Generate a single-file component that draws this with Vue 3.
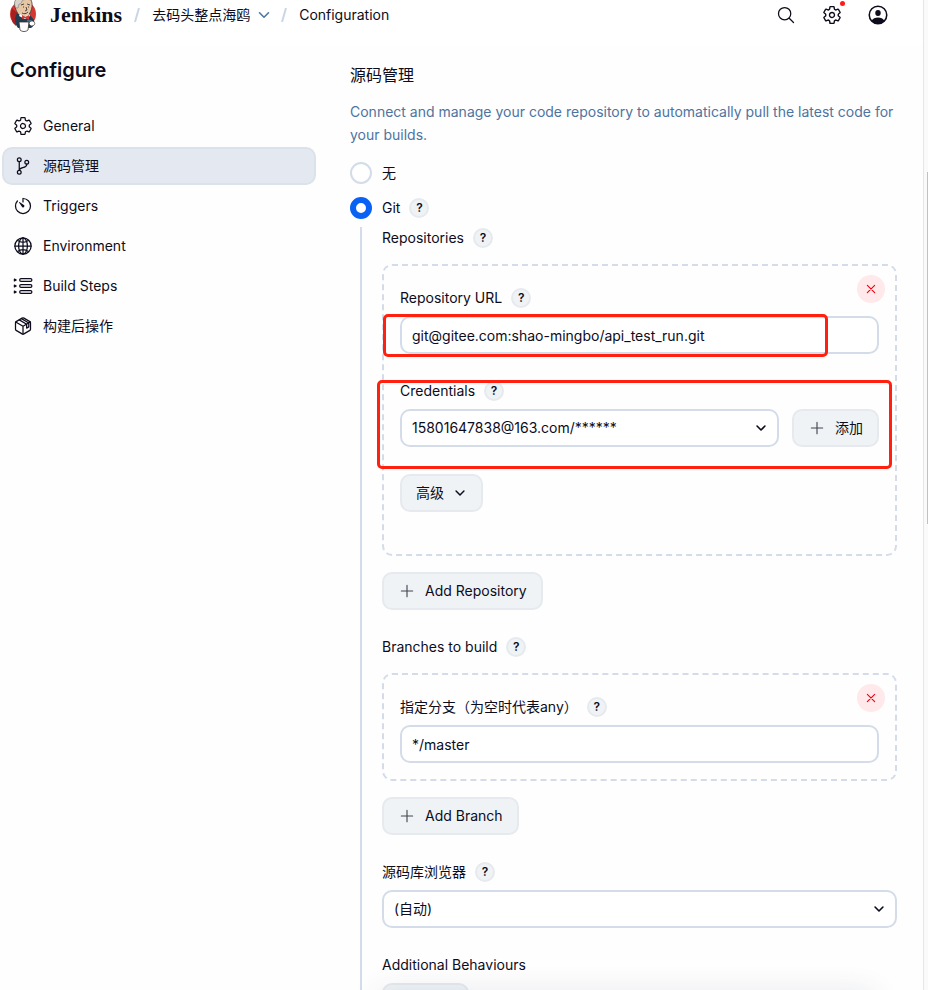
<script setup>
import { ref, h } from 'vue'

const scm = ref('git')
const repoUrl = ref('git@gitee.com:shao-mingbo/api_test_run.git')
const branch = ref('*/master')
const credentials = ref('15801647838@163.com/******')
const browser = ref('(自动)')
const active = ref('scm')

const sections = [
  { id: 'general', label: 'General', icon: 'gear' },
  { id: 'scm', label: '源码管理', icon: 'branch' },
  { id: 'triggers', label: 'Triggers', icon: 'timer' },
  { id: 'environment', label: 'Environment', icon: 'globe' },
  { id: 'steps', label: 'Build Steps', icon: 'list' },
  { id: 'post', label: '构建后操作', icon: 'cube' },
]

const gear =
  'M262.29 192.31a64 64 0 1057.4 57.4 64.13 64.13 0 00-57.4-57.4zM416.39 256a154.34 154.34 0 01-1.53 20.79l45.21 35.46a10.81 10.81 0 012.45 13.75l-42.77 74a10.81 10.81 0 01-13.14 4.59l-44.9-18.08a16.11 16.11 0 00-15.17 1.75A164.48 164.48 0 01325 400.8a15.94 15.94 0 00-8.82 12.14l-6.73 47.89a11.08 11.08 0 01-10.68 9.17h-85.54a11.11 11.11 0 01-10.69-8.87l-6.72-47.82a16.07 16.07 0 00-9-12.22 155.3 155.3 0 01-21.46-12.57 16 16 0 00-15.11-1.71l-44.89 18.07a10.81 10.81 0 01-13.14-4.58l-42.77-74a10.8 10.8 0 012.45-13.75l38.21-30a16.05 16.05 0 006-14.08c-.36-4.17-.58-8.33-.58-12.5s.21-8.27.58-12.35a16 16 0 00-6.07-13.94l-38.19-30A10.81 10.81 0 0149.48 186l42.77-74a10.81 10.81 0 0113.14-4.59l44.9 18.08a16.11 16.11 0 0015.17-1.75A164.48 164.48 0 01187 111.2a15.94 15.94 0 008.82-12.14l6.73-47.89A11.08 11.08 0 01213.23 42h85.54a11.11 11.11 0 0110.69 8.87l6.72 47.82a16.07 16.07 0 009 12.22 155.3 155.3 0 0121.46 12.57 16 16 0 0015.11 1.71l44.89-18.07a10.81 10.81 0 0113.14 4.58l42.77 74a10.8 10.8 0 01-2.45 13.75l-38.21 30a16.05 16.05 0 00-6.05 14.08c.33 4.14.55 8.3.55 12.47z'

const strokes = {
  gear: [gear],
  branch: [
    'M208 96a48 48 0 11-96 0 48 48 0 0196 0zM208 416a48 48 0 11-96 0 48 48 0 0196 0zM400 160a48 48 0 11-96 0 48 48 0 0196 0z',
    'M160 368V144M352 208c0 128-192 48-192 160',
  ],
  timer: [
    'M112.91 128A191.85 191.85 0 0064 254c-1.18 106.35 85.65 193.8 192 194 106.2.2 192-85.83 192-192 0-104.54-83.55-189.61-187.5-192a4.36 4.36 0 00-4.5 4.37V152',
  ],
  globe: [
    'M256 48C141.13 48 48 141.13 48 256s93.13 208 208 208 208-93.13 208-208S370.87 48 256 48z',
    'M256 48c-58.07 0-112.67 93.13-112.67 208S197.93 464 256 464s112.67-93.13 112.67-208S314.07 48 256 48z',
    'M117.33 117.33c38.24 27.15 86.38 43.34 138.67 43.34s100.43-16.19 138.67-43.34M394.67 394.67c-38.24-27.15-86.38-43.34-138.67-43.34s-100.43 16.19-138.67 43.34M256 48v416M464 256H48',
  ],
  list: [
    'M205 68h244a34 34 0 010 68H205a34 34 0 010-68zM205 222h244a34 34 0 010 68H205a34 34 0 010-68zM205 376h244a34 34 0 010 68H205a34 34 0 010-68z',
    'M36 78l46 24-46 24zM36 232l46 24-46 24zM36 386l46 24-46 24z',
  ],
  cube: [
    'M448 341.37V170.61A32 32 0 00432.11 143l-152-88.46a47.94 47.94 0 00-48.24 0L79.89 143A32 32 0 0064 170.61v170.76A32 32 0 0079.89 369l152 88.46a48 48 0 0048.24 0l152-88.46A32 32 0 00448 341.37z',
    'M69 153.99l187 110 187-110M256 463.99v-200M162 100l187 110v100l55-32v-100L216 68',
  ],
  search: ['M221.09 64a157.09 157.09 0 10157.09 157.09A157.1 157.1 0 00221.09 64zM338.29 338.29L448 448'],
  chevron: ['M112 184l144 144 144-144'],
  plus: ['M256 96v320M416 256H96'],
  close: ['M360 360L152 152M360 152L152 360'],
  person: ['M480 256a224 224 0 11-448 0 224 224 0 01448 0z'],
}

const fills = {
  timer: 'M233.38 278.63l-79-113a8.13 8.13 0 0111.32-11.32l113 79a32.5 32.5 0 01-37.25 53.26 33.21 33.21 0 01-8.07-7.94z',
  person: 'M256 128a70 76 0 110 152 70 76 0 010-152zM92 400c36-60 92-80 164-80s128 20 164 80c-40 52-100 84-164 84s-124-32-164-84z',
}

const Icon = (props) =>
  h('svg', { viewBox: '0 0 512 512', 'aria-hidden': 'true', fill: 'none' }, [
    ...strokes[props.name].map((d) =>
      h('path', {
        d,
        stroke: 'currentColor',
        'stroke-width': props.weight || 32,
        'stroke-linecap': 'round',
        'stroke-linejoin': 'round',
      }),
    ),
    fills[props.name] ? h('path', { d: fills[props.name], fill: 'currentColor' }) : null,
  ])
Icon.props = ['name', 'weight']

const Help = (props) => h('button', { type: 'button', 'aria-label': 'Help for ' + props.topic }, '?')
Help.props = ['topic']
</script>

<template>
  <div class="page">
    <div class="app">
      <header class="header">
        <a class="brand" href="#">
          <svg class="logo" viewBox="0 0 28 38" aria-hidden="true">
            <circle cx="14" cy="19" r="13" fill="#d33833" />
            <path d="M4 28c-2-4-3-10-1-15l5 5-1 13z" fill="#a91f20" />
            <path d="M8 17C5 12 5 5 9 3c4-3 11-3 13 2 2 4 1 9-1 13l-5 5-6-2z" fill="#e6c6a4" stroke="#3c3430" stroke-width=".8" />
            <path d="M7 13C4 9 6 3 10 2c4-2 10-1 12 3-4-1-7-1-9 1-1 3-2 3-3 3l-1 4z" fill="#d8d2ca" stroke="#6d6b6d" stroke-width=".5" />
            <path d="M12 10l3-1M18 9l3 1M14 12h1M19 12h1M17 12l1 3-2 1M13 18c2 1 4 1 6-1" fill="none" stroke="#3c3430" stroke-width=".9" />
            <path d="M8 18l6 4 7-2 4 5c1 4-1 7-3 8H9c-3-4-4-10-1-15z" fill="#213d4f" />
            <path d="M11 19l4 3 5-3 1 2-5 3-6-3z" fill="#fff" />
            <path d="M13 20l3 2 4-2v5l-4-2-3 1z" fill="#d33833" />
            <path d="M18 26h5M18 28h4" stroke="#6ca5bf" stroke-width="1" />
            <path d="M10 27h10l-1 8c-2 2-6 2-8 0z" fill="#fff" stroke="#3c3430" stroke-width=".8" />
            <path d="M20 29c0-3 4-4 5-2 2 2 0 4-3 4z" fill="#fff" stroke="#3c3430" stroke-width=".7" />
          </svg>
          <span class="wordmark">Jenkins</span>
        </a>
        <svg class="slash" viewBox="0 0 6 16" aria-hidden="true"><path d="M5 1L1 15" /></svg>
        <a class="crumb project" href="#">去码头整点海鸥</a>
        <button class="crumb-menu" type="button" aria-label="Project menu"><Icon name="chevron" weight="52" /></button>
        <svg class="slash" viewBox="0 0 6 16" aria-hidden="true"><path d="M5 1L1 15" /></svg>
        <a class="crumb" href="#">Configuration</a>
        <div class="actions">
          <button class="action" type="button" aria-label="Search"><Icon name="search" /></button>
          <button class="action" type="button" aria-label="Manage Jenkins">
            <Icon name="gear" weight="36" />
            <span class="dot"></span>
          </button>
          <button class="action" type="button" aria-label="Account"><Icon name="person" weight="40" /></button>
        </div>
      </header>

      <div class="body">
        <aside class="side">
          <h1 class="title">Configure</h1>
          <nav class="nav">
            <a
              v-for="s in sections"
              :key="s.id"
              class="nav-item"
              :class="{ selected: s.id === active }"
              :href="'#' + s.id"
              @click="active = s.id"
            >
              <Icon class="nav-icon" :name="s.icon" />
              <span>{{ s.label }}</span>
            </a>
          </nav>
        </aside>

        <main class="content">
          <h2 class="heading">源码管理</h2>
          <p class="description">
            Connect and manage your code repository to automatically pull the latest code for your builds.
          </p>

          <div class="radios">
            <div class="radio-row">
              <input id="scm-none" v-model="scm" class="radio" type="radio" name="scm" value="none" />
              <label for="scm-none">无</label>
            </div>
            <div class="radio-row">
              <input id="scm-git" v-model="scm" class="radio" type="radio" name="scm" value="git" />
              <label for="scm-git">Git</label>
              <Help class="help" topic="Git" />
            </div>
          </div>

          <div class="nested">
            <section class="group">
              <div class="label-row group-label">
                <span>Repositories</span>
                <Help class="help" topic="Repositories" />
              </div>
              <div class="chunk repository">
                <button class="remove" type="button" aria-label="Delete repository"><Icon name="close" /></button>
                <div class="field">
                  <div class="label-row">
                    <label for="repo-url">Repository URL</label>
                    <Help class="help" topic="Repository URL" />
                  </div>
                  <div class="control">
                    <input id="repo-url" v-model="repoUrl" class="input" type="text" spellcheck="false" />
                    <span class="mark mark-url"></span>
                  </div>
                </div>
                <div class="field">
                  <div class="label-row">
                    <label for="credentials">Credentials</label>
                    <Help class="help" topic="Credentials" />
                  </div>
                  <div class="split">
                    <div class="control">
                      <select id="credentials" v-model="credentials" class="input">
                        <option>15801647838@163.com/******</option>
                      </select>
                      <Icon class="caret" name="chevron" weight="60" />
                    </div>
                    <button class="button" type="button"><Icon class="plus" name="plus" />添加</button>
                  </div>
                  <span class="mark mark-credentials"></span>
                </div>
                <button class="button advanced" type="button">
                  高级<Icon class="more" name="chevron" weight="54" />
                </button>
              </div>
              <button class="button" type="button"><Icon class="plus" name="plus" />Add Repository</button>
            </section>

            <section class="group">
              <div class="label-row group-label">
                <span>Branches to build</span>
                <Help class="help" topic="Branches to build" />
              </div>
              <div class="chunk">
                <button class="remove" type="button" aria-label="Delete branch"><Icon name="close" /></button>
                <div class="field">
                  <div class="label-row">
                    <label for="branch">指定分支（为空时代表any）</label>
                    <Help class="help" topic="指定分支" />
                  </div>
                  <input id="branch" v-model="branch" class="input" type="text" spellcheck="false" />
                </div>
              </div>
              <button class="button" type="button"><Icon class="plus" name="plus" />Add Branch</button>
            </section>

            <div class="field">
              <div class="label-row">
                <label for="browser">源码库浏览器</label>
                <Help class="help" topic="源码库浏览器" />
              </div>
              <div class="control">
                <select id="browser" v-model="browser" class="input">
                  <option>(自动)</option>
                </select>
                <Icon class="caret" name="chevron" weight="60" />
              </div>
            </div>

            <div class="field">
              <div class="label-row"><span>Additional Behaviours</span></div>
              <button class="button behaviour" type="button" aria-label="Add behaviour">
                <Icon class="plus" name="plus" /><Icon class="more" name="chevron" weight="54" />
              </button>
            </div>
          </div>
          <div class="bottom-bar"></div>
        </main>
      </div>
    </div>
    <div class="track"><div class="thumb"></div></div>
  </div>
</template>

<style>
body {
  margin: 0;
  background: #fefefe;
}
</style>

<style scoped>
* {
  box-sizing: border-box;
}
.page {
  display: flex;
  height: 100vh;
  overflow: hidden;
  color: #0c0c1c;
  font: 14px/20px Inter, "Noto Sans CJK SC", sans-serif;
}
.app {
  flex: 1;
  min-width: 0;
  position: relative;
}
a {
  color: inherit;
  text-decoration: none;
}
button,
input,
select {
  font: inherit;
  color: inherit;
  margin: 0;
}
button {
  cursor: pointer;
}
svg {
  display: block;
  flex: none;
}

.header {
  display: flex;
  align-items: center;
  height: 46px;
  padding: 0 35px 16px 9px;
  background: #ffffff;
}
.brand {
  display: flex;
  align-items: center;
  gap: 13px;
}
.logo {
  width: 28px;
  height: 38px;
  margin: -5px 0 -3px;
}
.wordmark {
  font: bold 22px/28px "Liberation Serif", serif;
}
.slash {
  width: 6px;
  height: 16px;
  margin: 0 12px;
}
.slash path {
  stroke: #c9d6e6;
  stroke-width: 2;
}
.crumb-menu {
  display: flex;
  padding: 0;
  margin: 0 -3px 0 6px;
  border: 0;
  background: none;
  color: #4d78a8;
}
.crumb-menu svg {
  width: 16px;
  height: 16px;
}
.actions {
  display: flex;
  gap: 26px;
  margin-left: auto;
}
.action {
  position: relative;
  width: 20px;
  height: 20px;
  padding: 0;
  border: 0;
  background: none;
}
.dot {
  position: absolute;
  top: -4px;
  right: -3px;
  width: 5px;
  height: 5px;
  border-radius: 50%;
  background: #ff1a1a;
}

.body {
  display: flex;
  gap: 34px;
  padding: 0 26px 0 2px;
}
.side {
  flex: 0 0 314px;
  padding-top: 10px;
}
.title {
  margin: 0 8px 23px;
  font-size: 20px;
  line-height: 28px;
  font-weight: 600;
}
.nav {
  display: flex;
  flex-direction: column;
  gap: 2px;
}
.nav-item {
  display: flex;
  align-items: center;
  gap: 10px;
  height: 38px;
  padding: 0 9px;
  border: 2px solid transparent;
  border-radius: 10px;
}
.nav-item.selected {
  background: #e4e9f1;
  border-color: #dce2ea;
}
.nav-icon {
  width: 20px;
  height: 20px;
}

.content {
  flex: 1;
  min-width: 0;
  position: relative;
  padding-top: 17px;
}
.heading {
  margin: 0 0 13px;
  font-size: 16px;
  line-height: 24px;
  font-weight: 400;
}
.description {
  margin: 0 0 16px;
  line-height: 23px;
  color: #4d74a0;
}
.radios {
  display: flex;
  flex-direction: column;
  gap: 13px;
  margin-bottom: 8px;
}
.radio-row {
  display: flex;
  align-items: center;
  height: 22px;
}
.radio {
  appearance: none;
  width: 22px;
  height: 22px;
  margin-right: 10px;
  border: 2px solid #d3dce8;
  border-radius: 50%;
  background: #ffffff;
}
.radio:checked {
  border: 6px solid #0a62f5;
}
.help {
  width: 20px;
  height: 20px;
  margin-left: 9px;
  padding: 0;
  border: 2px solid #e6eaee;
  border-radius: 50%;
  background: #eff3f6;
  font-size: 12px;
  line-height: 16px;
  font-weight: 600;
}

.nested {
  display: flex;
  flex-direction: column;
  gap: 27px;
  margin-left: 10px;
  padding: 1px 0 0 20px;
  border-left: 2px solid #d3dce8;
}
.group {
  display: flex;
  flex-direction: column;
  align-items: flex-start;
  gap: 16px;
}
.label-row {
  display: flex;
  align-items: center;
  height: 20px;
}
.chunk {
  position: relative;
  display: flex;
  flex-direction: column;
  gap: 27px;
  width: 100%;
  padding: 22px 16px 16px;
  border: 2px dashed #d3dce8;
  border-radius: 10px;
}
.repository {
  padding-bottom: 42px;
}
.remove {
  position: absolute;
  top: 9px;
  right: 10px;
  display: grid;
  place-items: center;
  width: 28px;
  height: 28px;
  padding: 0;
  border: 0;
  border-radius: 50%;
  background: #ffe9ea;
  color: #f00010;
}
.remove svg {
  width: 18px;
  height: 18px;
}
.field {
  position: relative;
  display: flex;
  flex-direction: column;
  align-items: stretch;
  gap: 8px;
}
.control {
  position: relative;
  flex: 1;
}
.split {
  display: flex;
  gap: 13px;
}
.input {
  display: block;
  appearance: none;
  width: 100%;
  height: 38px;
  padding: 0 10px;
  border: 2px solid #d3dce8;
  border-radius: 10px;
  background: #ffffff;
  outline: none;
}
.caret {
  position: absolute;
  top: 12px;
  right: 11px;
  width: 14px;
  height: 14px;
  pointer-events: none;
}
.button {
  display: flex;
  align-items: center;
  align-self: flex-start;
  gap: 9px;
  height: 38px;
  padding: 0 14px;
  border: 2px solid #e6eaee;
  border-radius: 10px;
  background: #eff3f6;
  white-space: nowrap;
}
.behaviour {
  gap: 23px;
}
.plus {
  width: 18px;
  height: 18px;
  color: #44444f;
}
.more {
  width: 14px;
  height: 14px;
}

.mark {
  position: absolute;
  border: 3px solid #ff2010;
  border-radius: 5px;
  pointer-events: none;
}
.mark-url {
  top: -2px;
  right: 51px;
  bottom: -3px;
  left: -17px;
}
.mark-credentials {
  top: -1px;
  right: -13px;
  bottom: -22px;
  left: -23px;
}

.bottom-bar {
  position: fixed;
  bottom: -20px;
  left: 378px;
  right: 55px;
  height: 20px;
  box-shadow: 0 4px 30px rgba(40, 60, 90, 0.14);
  pointer-events: none;
}
.track {
  flex: 0 0 5px;
  padding: 172px 0 0 3px;
  border-left: 1px solid #e6e6e6;
  background: #fafafa;
}
.thumb {
  height: 352px;
  background: #c1c1c1;
}
</style>
